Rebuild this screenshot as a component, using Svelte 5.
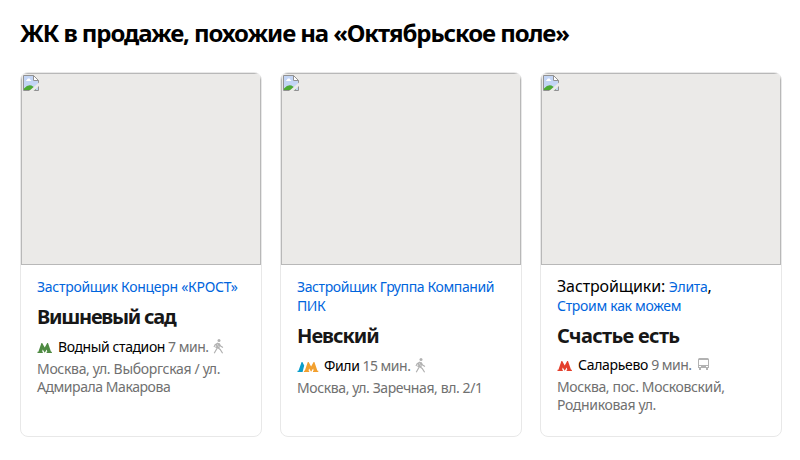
<script>
  const cards = [
    {
      label: '',
      developers: [{ text: 'Застройщик Концерн «КРОСТ»', spacing: -0.28 }],
      name: 'Вишневый сад', nameSpacing: -1.25,
      lines: ['#4f8b43'],
      station: 'Водный стадион', stationSpacing: -0.4, time: '7 мин.', transport: 'walk',
      address: [{ text: 'Москва, ул. Выборгская / ул.', spacing: -0.32 }, { text: 'Адмирала Макарова', spacing: -0.44 }]
    },
    {
      label: '',
      developers: [{ text: 'Застройщик Группа Компаний ПИК', spacing: -0.39 }],
      name: 'Невский', nameSpacing: -1,
      lines: ['#0a9dcb', '#f2a02f'],
      station: 'Фили', stationSpacing: -0.4, time: '15 мин.', transport: 'walk',
      address: [{ text: 'Москва, ул. Заречная, вл. 2/1', spacing: -0.4 }]
    },
    {
      label: 'Застройщики:',
      developers: [{ text: 'Элита', spacing: -0.3 }, { text: 'Строим как можем', spacing: -0.3 }],
      name: 'Счастье есть', nameSpacing: -0.67,
      lines: ['#e4402d'],
      station: 'Саларьево', stationSpacing: -0.3, time: '9 мин.', transport: 'bus',
      address: [{ text: 'Москва, пос. Московский,', spacing: -0.36 }, { text: 'Родниковая ул.', spacing: -0.33 }]
    }
  ];
</script>

<section class="similar">
  <h2>ЖК в продаже, похожие на «Октябрьское поле»</h2>
  <div class="cards">
    {#each cards as card}
      <article class="card">
        <div class="photo">
          <svg width="16" height="16" viewBox="0 0 16 16">
            <path d="M0.5 0.5H10.5L15.5 5.5V15.5H0.5Z" fill="#c3d5f5" stroke="#929292" />
            <path d="M3 6q0-1 1-1q0-2 2-1.4q1.4 0 1.3 1.4q1 0 1 1Z" fill="#fff" />
            <path d="M1 15v-1.5q4-4.5 7.5-3q3 1 4.5 4.5Z" fill="#4daa35" />
            <path d="M10.5 0.5V5.5H15.5Z" fill="#fff" stroke="#929292" />
            <path d="M6 16L16 7.5V11L10.5 16Z" fill="#ebeae8" />
          </svg>
        </div>
        <div class="info">
          <div class="developers">
            {#if card.label}<span class="label">{card.label}</span>{' '}{/if}{#each card.developers as dev, i}{#if i}<span class="label">,</span>{' '}{/if}<a class:whole={card.label} style:letter-spacing="{dev.spacing}px">{dev.text}</a>{/each}
          </div>
          <h3 style:letter-spacing="{card.nameSpacing}px">{card.name}</h3>
          <div class="metro" class:by-bus={card.transport === 'bus'}>
            <svg class="lines" width={card.lines.length > 1 ? 22 : 15} height="10" viewBox="0 0 {card.lines.length > 1 ? 22 : 15} 10">
              {#if card.lines.length > 1}
                <path d="M.5 10V8.8H1.5L4.6 0H5.4L7.2 3.6L5.6 10Z" fill={card.lines[0]} />
              {/if}
              <path transform={card.lines.length > 1 ? 'translate(6.4 0)' : undefined} d="M.5 10V8.8H1.4L4.4 0H5.2L7.7 4.6L10.2 0H11L14 8.8H14.9V10H9.6V8.8H10.3L9.7 6.6L7.7 9.8L5.7 6.6L5.1 8.8H5.8V10Z" fill={card.lines[card.lines.length - 1]} />
            </svg>
            <span class="station" style:letter-spacing="{card.stationSpacing}px">{card.station}</span>
            <span class="time">{card.time}</span>
            {#if card.transport === 'walk'}
              <svg class="walk" width="11" height="15" viewBox="0 0 11 15" fill="none" stroke="#b2b2b2" stroke-width="1.2">
                <circle cx="6" cy="1.5" r="1.5" fill="#b2b2b2" stroke="none" />
                <path d="M5 4L2.2 5.6L1 8M5.5 4L4.2 9L1.2 14.2M6 4.3L7.6 7L10 8.4M4.6 8.4L7.2 10.4L9.6 14.2M3.6 5L3 9M6.4 5L6 9" />
              </svg>
            {:else}
              <svg class="bus" width="12" height="12" viewBox="0 0 12 12">
                <path fill="#b2b2b2" fill-rule="evenodd" d="M1.5 0H9.5Q11 0 11 1.5V10H10V12H8V10H3V12H1V10H0V1.5Q0 0 1.5 0ZM1 2V7H10V2ZM1 8V9H3V8ZM8 8V9H10V8Z" />
              </svg>
            {/if}
          </div>
          <div class="address">
            {#each card.address as row}<div style:letter-spacing="{row.spacing}px">{row.text}</div>{/each}
          </div>
        </div>
      </article>
    {/each}
  </div>
</section>

<style>
  :global(body) { background: #fff; }
  .similar {
    padding: 17px 18px 0 20px;
    font-family: 'Noto Sans', 'Open Sans', sans-serif;
    color: #000;
  }
  h2 { margin: 0; height: 55px; font-size: 24px; line-height: 32px; font-weight: 700; letter-spacing: -1.1px; white-space: nowrap; }
  .cards { display: flex; gap: 18px; }
  .card {
    box-sizing: border-box;
    width: 242px;
    height: 365px;
    border: 1px solid #e8e8e8;
    border-radius: 8px;
    overflow: hidden;
  }
  .photo {
    box-sizing: border-box;
    height: 192px;
    padding: 1px;
    border: 1px solid #b8b8b8;
    background: #ebeae8;
  }
  .photo svg { display: block; }
  .info { padding: 12px 16px 0; }
  .developers { font-size: 14px; line-height: 19px; }
  .label { font-size: 16px; line-height: 19px; letter-spacing: -0.12px; }
  a { color: #0065dd; }
  a.whole { white-space: nowrap; }
  a.whole:last-child { display: inline-block; }
  h3 { margin: 7px 0 0; font-size: 20px; line-height: 28px; font-weight: 700; color: #171717; white-space: nowrap; }
  .metro { display: flex; align-items: center; height: 20px; margin-top: 6px; font-size: 14px; line-height: 20px; white-space: nowrap; }
  .metro.by-bus { margin-top: 5px; }
  .lines { flex: none; margin: 2px 6px 0 0; }
  .lines[width='22'] { margin-right: 5px; }
  .time { margin-left: 3px; letter-spacing: -0.5px; color: #707070; }
  .walk { margin: -2px 0 0 5px; }
  .bus { margin: -2px 0 0 6px; }
  .address { margin-top: 3px; font-size: 14px; line-height: 18px; color: #707070; white-space: nowrap; }
</style>
